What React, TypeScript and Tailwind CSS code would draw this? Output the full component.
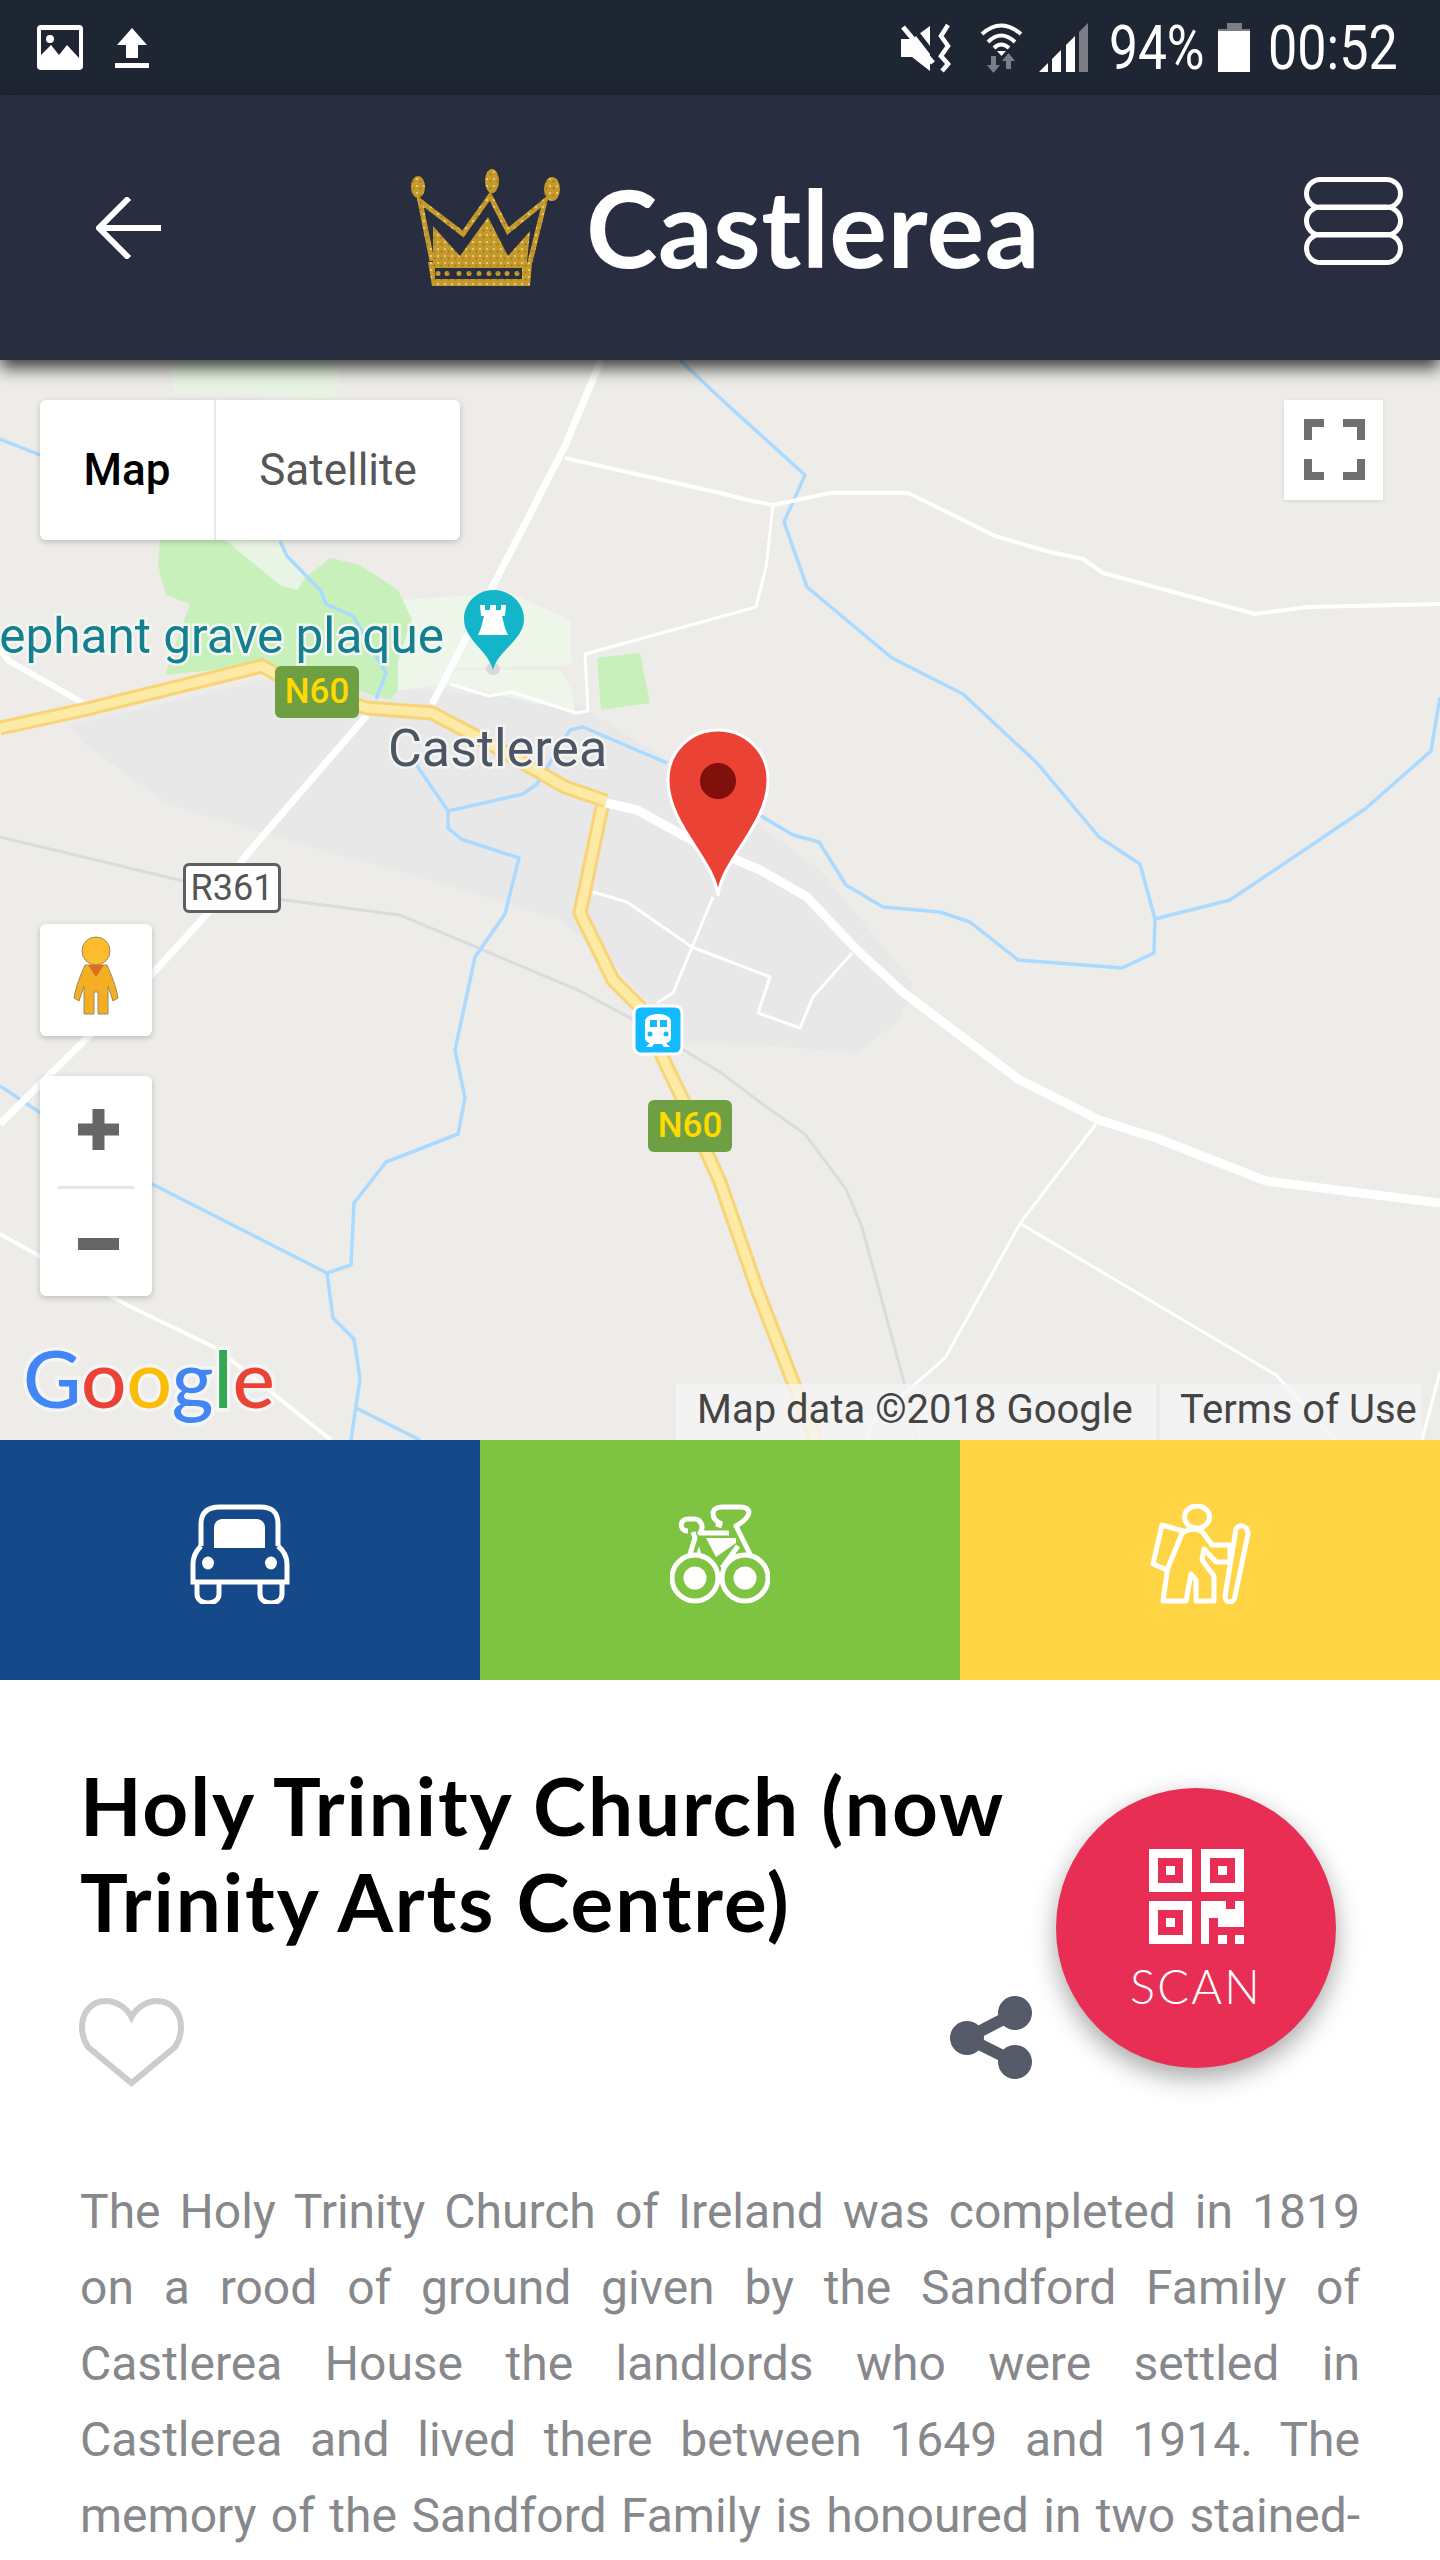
import React from 'react';

const whiteRoads: [string, number][] = [
  ['606,803 637,810 697,843 760,870 807,897 857,950 904,993 1018,1079 1099,1120 1156,1138 1266,1181 1440,1203', 9],
  ['601,360 565,446 494,584 432,704', 7],
  ['367,715 243,859 207,914 154,972 87,1038 0,1124', 7],
  ['0,650 9,661 83,703', 6],
  ['0,1234 129,1306 216,1348 331,1440', 4],
  ['565,458 720,493 752,501 773,505 830,493 908,493 945,511 995,536 1046,551 1083,559 1103,573 1255,614 1308,607 1440,604', 4],
  ['773,505 766,567 756,607 720,617 585,654 588,711 576,713 512,692 489,696 450,684', 3],
  ['593,892 627,902 692,947 770,977 758,1013 800,1028 813,997 852,953', 3],
  ['713,897 673,993 657,1003', 3],
  ['1096,1124 1021,1222 945,1358 913,1386 871,1423 868,1440', 3],
  ['1021,1224 1276,1375 1335,1440', 3],
  ['1440,1372 1422,1440', 3],
];

const rivers = [
  '720,398 805,475 784,522 807,587 892,658 963,694 1037,763 1099,837 1140,864 1155,919 1154,953 1122,968 1018,960 970,922 940,912 883,907 846,885 819,842 793,835 761,816',
  '667,763 583,727 570,730 537,784 523,794 448,811 448,828 461,839 519,858 505,914 475,957 455,1050 465,1098 458,1134 386,1162 354,1203 351,1265 327,1273 152,1184 39,1112 0,1086',
  '448,811 415,763',
  '327,1273 333,1318 354,1339 360,1379 351,1440',
  '356,1408 420,1440',
  '1440,697 1431,751 1365,809 1230,900 1155,919',
  '680,360 720,398',
  '0,439 40,455',
  '280,541 287,556 321,591 326,604 353,616 386,673 376,699',
];

const n60 = [
  '0,728 87,709 262,666 294,684 367,708 432,713 487,742 565,787 606,801',
  '602,807 580,913 613,980 640,1007 667,1067 683,1100 720,1182 757,1289 793,1382 816,1440',
];

function MapCanvas() {
  return (
    <svg viewBox="0 360 1440 1080" className="absolute inset-0 w-full h-full">
      <rect x="0" y="360" width="1440" height="1080" fill="#edece8" />
      {/* town */}
      <polygon points="70,725 262,680 400,690 570,700 700,780 820,870 913,983 900,1020 857,1053 760,1045 683,1043 610,960 560,920 430,880 321,850 170,805 85,745" fill="#e8e8e8" />
      {/* parks */}
      <polygon points="170,360 340,360 335,400 225,392 174,394" fill="#e8f4e4" />
      <polygon points="398,660 450,670 560,670 572,690 575,712 450,684 398,690" fill="#eef6ea" />
      <polygon points="400,600 510,593 570,620 572,665 400,670" fill="#eef6ea" />
      <polygon points="160,540 158,565 166,595 190,604 170,660 165,675 262,665 290,670 390,700 398,690 398,660 412,620 398,590 360,565 330,558 305,578 297,590 280,585 230,540" fill="#c8f0bb" />
      <polygon points="225,540 280,585 297,590 305,578 280,541" fill="#e8f4e4" />
      <polygon points="597,658 640,653 650,703 601,710" fill="#c8f0bb" />
      {/* railway */}
      <polyline points="0,837 179,880 285,900 400,915 578,990 634,1020 720,1072 761,1103 805,1134 846,1189 862,1227 904,1382 917,1440" fill="none" stroke="#d8dcdf" strokeWidth="3" />
      {rivers.map((r, i) => (
        <polyline key={i} points={r} fill="none" stroke="#aadaff" strokeWidth="3.5" strokeLinejoin="round" />
      ))}
      {whiteRoads.map(([r, w], i) => (
        <polyline key={i} points={r} fill="none" stroke="#ffffff" strokeWidth={w} strokeLinejoin="round" />
      ))}
      {n60.map((r, i) => (
        <polyline key={i} points={r} fill="none" stroke="#f8d377" strokeWidth="15" strokeLinejoin="round" />
      ))}
      {n60.map((r, i) => (
        <polyline key={i} points={r} fill="none" stroke="#fdeba5" strokeWidth="9" strokeLinejoin="round" />
      ))}

      {/* labels */}
      <text x="444" y="653" textAnchor="end" fontSize="49.5" fill="#14808f" stroke="#f4f6f2" strokeWidth="5" paintOrder="stroke" className="font-['Roboto']">
        ephant grave plaque
      </text>
      <text x="388" y="766" fontSize="52" fill="#4b5563" stroke="#f4f4f2" strokeWidth="5" paintOrder="stroke" className="font-['Roboto']">
        Castlerea
      </text>

      {/* landmark pin */}
      <ellipse cx="493" cy="669" rx="7" ry="6" fill="#d8d8d8" />
      <path d="M493 670 C488 650 464 640 464 619 C464 603 477 590 493.5 590 C510 590 524 603 524 619 C524 640 498 650 493 670 Z" fill="#14b5c8" />
      <polygon points="480,605 485,605 485,610 490,610 490,605 496,605 496,610 501,610 501,605 506,605 505,616 502,616 505,628 508,635 478,635 481,628 484,616 481,616" fill="#ffffff" />

      {/* train stop */}
      <rect x="634" y="1006" width="48" height="48" rx="7" fill="#14baff" stroke="#ffffff" strokeWidth="3" />
      <path d="M645 1022 C645 1016 652 1014 658 1014 C664 1014 671 1016 671 1022 V1038 C671 1041 668 1043 665 1043 H651 C648 1043 645 1041 645 1038 Z" fill="#ffffff" />
      <rect x="650" y="1020" width="7" height="7" fill="#14baff" />
      <rect x="660" y="1020" width="7" height="7" fill="#14baff" />
      <circle cx="650" cy="1034" r="2.5" fill="#14baff" />
      <circle cx="666" cy="1034" r="2.5" fill="#14baff" />
      <path d="M650 1043 L646 1047 H652 L654 1044 H662 L664 1047 H670 L666 1043 Z" fill="#ffffff" />

      {/* red marker */}
      <path d="M718 896 C715 860 668 825 668 780 C668 752 690 730 718 730 C746 730 768 752 768 780 C768 825 721 860 718 896 Z" fill="#ea4335" stroke="#ffffff" strokeWidth="3" />
      <circle cx="718" cy="781" r="18" fill="#7f100c" />

      {/* google logo */}
      <text x="23" y="1408" fontSize="80" fontWeight="500" stroke="#f5f5f5" strokeWidth="7" paintOrder="stroke" className="font-['Lato']">
        <tspan fill="#4285f4">G</tspan>
        <tspan fill="#ea4335">o</tspan>
        <tspan fill="#fbbc05">o</tspan>
        <tspan fill="#4285f4">g</tspan>
        <tspan fill="#34a853">l</tspan>
        <tspan fill="#ea4335">e</tspan>
      </text>
    </svg>
  );
}

function Shield({ className }: { className: string }) {
  return (
    <div className={`absolute w-[84px] h-[52px] rounded-md bg-[#6f9f43] text-[#ffd900] text-[35px] font-medium flex items-center justify-center ${className}`}>
      N60
    </div>
  );
}

function Crown() {
  return (
    <svg viewBox="30 18 150 122" className="w-[150px] h-[122px] shrink-0">
      <defs>
        <pattern id="glitter" width="7" height="7" patternUnits="userSpaceOnUse">
          <rect width="7" height="7" fill="#c49a2c" />
          <circle cx="2" cy="2" r="1.1" fill="#efd582" />
          <circle cx="5.5" cy="4.5" r="0.9" fill="#96731d" />
        </pattern>
      </defs>
      <g fill="url(#glitter)">
        <ellipse cx="38" cy="38" rx="7" ry="11" />
        <ellipse cx="112" cy="32" rx="7" ry="12" />
        <ellipse cx="172" cy="40" rx="8" ry="12" />
        <polygon points="53,77 80,107 108,68 128,107 150,82 147,113 53,113" />
        <path fillRule="evenodd" d="M48 113 H152 L150 137 H52 Z M55 119 V130 H142 V119 Z" />
        {[58, 67, 79, 89, 99, 109, 118, 127, 137].map((x) => (
          <circle key={x} cx={x} cy="124.5" r="2.5" />
        ))}
      </g>
      <polyline points="52,112 40,52 83,85 110,47 128,82 165,52 150,113" fill="none" stroke="url(#glitter)" strokeWidth="5" />
    </svg>
  );
}

function StatusBar() {
  return (
    <div className="h-[95px] bg-[#1e2533] flex items-center text-white">
      <svg viewBox="0 0 46 45" className="w-[46px] h-[45px] ml-[37px]">
        <rect width="46" height="45" rx="4" fill="#ffffff" />
        <rect x="4" y="5" width="38" height="30" fill="#1e2533" />
        <circle cx="13" cy="14" r="4" fill="#ffffff" />
        <polygon points="4,35 4,30 14,20 22,30 30,20 42,33 42,38 4,38" fill="#ffffff" />
      </svg>
      <svg viewBox="0 0 34 40" className="w-[34px] h-[40px] ml-[32px]">
        <polygon points="17,0 32,17 23,17 23,30 11,30 11,17 2,17" fill="#ffffff" />
        <rect x="0" y="35" width="34" height="5" fill="#ffffff" />
      </svg>
      <svg viewBox="0 0 52 50" className="w-[52px] h-[50px] ml-[751px]">
        <polygon points="1,16 12,16 30,3 30,48 12,34 1,34" fill="#ffffff" />
        <line x1="9" y1="0" x2="37" y2="36" stroke="#1e2533" strokeWidth="5" />
        <line x1="3" y1="4" x2="33" y2="40" stroke="#ffffff" strokeWidth="5" />
        <polyline points="48,2 41,13 48,23 41,33 48,41 42,48" fill="none" stroke="#ffffff" strokeWidth="4.5" />
      </svg>
      <svg viewBox="0 0 43 50" className="w-[43px] h-[50px] ml-[28px]">
        <g fill="none" stroke="#ffffff" strokeWidth="4">
          <path d="M2 11 Q21 -6 41 11" />
          <path d="M8 19 Q21 6 35 19" />
          <path d="M14 25 Q21 18 29 25" />
        </g>
        <polygon points="17,28 26,28 21.5,33" fill="#ffffff" />
        <polygon points="11,33 16,33 16,42 20,42 13.5,50 7,42 11,42" fill="#7b7e87" />
        <polygon points="28.5,30 35,38 31,38 31,46 26,46 26,38 22,38" fill="#7b7e87" />
      </svg>
      <svg viewBox="0 0 49 49" className="w-[49px] h-[49px] ml-[16px]">
        <polygon points="0,49 9,40 9,49" fill="#ffffff" />
        <polygon points="13,36 22,27 22,49 13,49" fill="#ffffff" />
        <polygon points="27,22 36,13 36,49 27,49" fill="#ffffff" />
        <polygon points="40,9 49,0 49,49 40,49" fill="#7b7e87" />
      </svg>
      <span className="ml-[21px] w-[94px] text-[62px] leading-none origin-left scale-x-[0.83] whitespace-nowrap">94%</span>
      <div className="ml-[15px] w-[32px] h-[49px] flex flex-col items-center">
        <div className="w-[15px] h-[6px] bg-[#7b7e87]" />
        <div className="w-[32px] h-[2px] bg-[#7b7e87]" />
        <div className="w-[32px] h-[41px] bg-white" />
      </div>
      <span className="ml-[18px] text-[62px] leading-none origin-left scale-x-[0.84] whitespace-nowrap">00:52</span>
    </div>
  );
}

function Header() {
  return (
    <header className="relative z-10 h-[265px] bg-[#282e40] flex items-center shadow-[0_8px_16px_rgba(0,0,0,0.75)]">
      <svg viewBox="0 0 65 62" className="w-[65px] h-[62px] ml-[96px] shrink-0">
        <polyline points="33,1 3,31 33,61" fill="none" stroke="#ffffff" strokeWidth="6" />
        <line x1="5" y1="31" x2="65" y2="31" stroke="#ffffff" strokeWidth="6" />
      </svg>
      <div className="ml-[249px] flex items-center w-[894px]">
        <Crown />
        <span className="ml-[26px] -mt-[4px] text-[108px] leading-none font-bold text-white font-['Lato'] tracking-[0.5px]">Castlerea</span>
      </div>
      <svg viewBox="0 0 99 88" className="w-[99px] h-[88px] mb-[14px] shrink-0">
        <g fill="none" stroke="#ffffff" strokeWidth="5">
          <rect x="2.5" y="2.5" width="94" height="28" rx="14" />
          <rect x="2.5" y="30" width="94" height="28" rx="14" />
          <rect x="2.5" y="57.5" width="94" height="28" rx="14" />
        </g>
      </svg>
    </header>
  );
}

function MapSection() {
  return (
    <section className="relative h-[1080px] overflow-hidden">
      <MapCanvas />
      <Shield className="left-[275px] top-[306px]" />
      <Shield className="left-[648px] top-[740px]" />
      <div className="absolute left-[183px] top-[503px] w-[98px] h-[50px] rounded-md bg-white border-[3px] border-[#5f5f5f] text-[#555] text-[36px] leading-none flex items-center justify-center">
        R361
      </div>

      {/* map type */}
      <div className="absolute left-[40px] top-[40px] w-[420px] h-[140px] bg-white rounded-md flex shadow-[0_2px_6px_rgba(0,0,0,0.2)] text-[44px]">
        <div className="w-[176px] border-r-2 border-[#e8e8e8] flex items-center justify-center font-medium text-black">Map</div>
        <div className="flex-1 flex items-center justify-center text-[#565656]">Satellite</div>
      </div>

      {/* fullscreen */}
      <div className="absolute left-[1284px] top-[40px] w-[99px] h-[100px] bg-white shadow-[0_1px_4px_rgba(0,0,0,0.1)]">
        <svg viewBox="0 0 99 100" className="w-full h-full">
          <g fill="none" stroke="#6f6f6f" strokeWidth="8">
            <polyline points="24,40 24,23 40,23" />
            <polyline points="59,23 77,23 77,40" />
            <polyline points="24,59 24,76 40,76" />
            <polyline points="59,76 77,76 77,59" />
          </g>
        </svg>
      </div>

      {/* pegman */}
      <div className="absolute left-[40px] top-[564px] w-[112px] h-[112px] bg-white rounded-md shadow-[0_2px_6px_rgba(0,0,0,0.2)]">
        <svg viewBox="0 0 112 112" className="w-full h-full">
          <circle cx="56" cy="27" r="14" fill="#fdbd2c" stroke="#9a8a60" strokeWidth="1" />
          <path d="M45 41 H67 C71 50 76 62 78 74 L73 77 L68 62 V90 H58 V68 H54 V90 H44 V62 L39 77 L34 74 C36 62 41 50 45 41 Z" fill="#f5ae24" stroke="#9a8a60" strokeWidth="1" />
          <polygon points="48,41 64,41 56,53" fill="#d9701a" />
        </svg>
      </div>

      {/* zoom */}
      <div className="absolute left-[40px] top-[716px] w-[112px] h-[220px] bg-white rounded-md flex flex-col items-center shadow-[0_2px_6px_rgba(0,0,0,0.2)]">
        <svg viewBox="0 0 41 41" className="w-[41px] h-[41px] mt-[33px] ml-[4px]">
          <path d="M14.5 0 H26.5 V14.5 H41 V26.5 H26.5 V41 H14.5 V26.5 H0 V14.5 H14.5 Z" fill="#666666" />
        </svg>
        <div className="w-[76px] h-[3px] bg-[#e6e6e6] mt-[36px]" />
        <div className="w-[41px] h-[12px] bg-[#666666] mt-[49px] ml-[4px]" />
      </div>

      {/* attribution */}
      <div className="absolute left-[676px] bottom-0 h-[56px] flex text-[40px] leading-none text-[#444] gap-[4px]">
        <div className="w-[480px] pl-[21px] pb-[5px] bg-[#f5f5f5]/80 flex items-center whitespace-nowrap">Map data ©2018 Google</div>
        <div className="w-[262px] pl-[20px] pb-[5px] bg-[#f5f5f5]/80 flex items-center whitespace-nowrap">Terms of Use</div>
      </div>
    </section>
  );
}

function TravelTabs() {
  return (
    <div className="h-[240px] flex">
      <div className="w-[480px] bg-[#15498a] flex items-start justify-center pt-[64px]">
        <svg viewBox="0 0 100 100" className="w-[100px] h-[100px]">
          <g fill="none" stroke="#ffffff" strokeWidth="5">
            <path d="M11 42 V20 C11 7 19 3 30 3 H70 C81 3 88 7 88 20 V42" />
            <path d="M11 42 C6 47 3 52 3 60 V78 H97 V60 C97 52 94 47 88 42" />
            <path d="M7 79 V90 C7 102 29 102 29 90 V79" />
            <path d="M70 79 V90 C70 102 92 102 92 90 V79" />
          </g>
          <path d="M24 44 V24 C24 18 28 15 33 15 H66 C71 15 75 18 75 24 V44 Z" fill="#ffffff" />
          <ellipse cx="18" cy="59" rx="6" ry="6.5" fill="#ffffff" />
          <ellipse cx="81" cy="59" rx="6" ry="6.5" fill="#ffffff" />
        </svg>
      </div>
      <div className="w-[480px] bg-[#7fc342] flex items-start justify-center pt-[64px]">
        <svg viewBox="0 0 100 100" className="w-[100px] h-[100px]">
          <g fill="none" stroke="#ffffff" strokeWidth="5" strokeLinejoin="round">
            <circle cx="25" cy="74" r="23" />
            <circle cx="75" cy="74" r="23" />
            <path d="M52 20 C40 15 40 3 52 3 H70 C82 3 83 12 66 22 L81 52" />
            <path d="M46 20 L52 22" />
            <path d="M18 27 C9 27 9 15 18 15 H24 C32 15 34 24 30 29 H59" />
            <path d="M23 28 L25 34 L20 50" />
            <path d="M68 42 L52 64" />
          </g>
          <circle cx="25" cy="74" r="11.5" fill="#ffffff" />
          <circle cx="75" cy="74" r="11.5" fill="#ffffff" />
          <polygon points="36,34 66,34 66,39 46,53" fill="#ffffff" />
          <polygon points="29,42 33,56 26,51" fill="#ffffff" />
        </svg>
      </div>
      <div className="w-[480px] bg-[#ffd545] flex items-start justify-center pt-[64px]">
        <svg viewBox="0 0 101 100" className="w-[101px] h-[100px]">
          <g fill="none" stroke="#ffffff" strokeWidth="5" strokeLinejoin="round">
            <ellipse cx="47" cy="13" rx="12.5" ry="11" />
            <path d="M12 21 L33 27 L17 66 L3 60 Z" />
            <path d="M33 29 C38 24 50 24 54 30 L62 41 H80 V58 H66 L54 45 L52 56 L64 72 V97 H46 V76 L41 70 L36 97 H13 L18 62" />
            <path d="M86 25 C90 19 98 22 98 30 L85 92 C84 100 75 100 75 92 Z" />
          </g>
        </svg>
      </div>
    </div>
  );
}

function ScanButton() {
  return (
    <div className="absolute left-[1056px] top-[108px] w-[280px] h-[280px] rounded-full bg-[#e82e54] shadow-[0_10px_26px_rgba(0,0,0,0.35)] flex flex-col items-center">
      <svg viewBox="0 0 95 95" className="w-[95px] h-[95px] mt-[61px] shrink-0">
        <g fill="none" stroke="#ffffff" strokeWidth="9">
          <rect x="4.5" y="4.5" width="34" height="34" />
          <rect x="56.5" y="4.5" width="34" height="34" />
          <rect x="4.5" y="56.5" width="34" height="34" />
        </g>
        <g fill="#ffffff">
          <rect x="17" y="17" width="9" height="9" />
          <rect x="69" y="17" width="9" height="9" />
          <rect x="17" y="69" width="9" height="9" />
          <polygon points="52,52 77,52 77,60 86,60 86,52 95,52 95,78 69,78 69,69 60,69 60,95 52,95" />
          <rect x="69" y="86" width="9" height="9" />
          <rect x="86" y="86" width="9" height="9" />
        </g>
      </svg>
      <span className="mt-[14px] text-[47px] leading-[56px] font-light text-white font-['Lato'] tracking-[2.2px]">SCAN</span>
    </div>
  );
}

const bodyLines = [
  'The Holy Trinity Church of Ireland was completed in 1819',
  'on a rood of ground given by the Sandford Family of',
  'Castlerea House the landlords who were settled in',
  'Castlerea and lived there between 1649 and 1914. The',
  'memory of the Sandford Family is honoured in two stained-',
];

function Details() {
  return (
    <section className="relative bg-white px-20 pt-[77px]">
      <h1 className="text-[80px] leading-[96px] font-bold text-black font-['Lato'] tracking-[1.9px] whitespace-nowrap">
        Holy Trinity Church (now
        <br />
        Trinity Arts Centre)
      </h1>
      <div className="mt-[49px] w-[952px] flex justify-between items-start">
        <svg viewBox="0 0 105 90" className="w-[105px] h-[90px] -ml-px">
          <path d="M52.5 19 C47 9 37 3 27 3 C13 3 3 14 3 29 C3 37 5 43 9 49 L52.5 85 L96 49 C100 43 102 37 102 29 C102 14 92 3 78 3 C68 3 58 9 52.5 19 Z" fill="none" stroke="#cccccc" strokeWidth="6" />
        </svg>
        <svg viewBox="0 0 82 84" className="w-[82px] h-[84px] -mt-[2px]">
          <g stroke="#555a68" strokeWidth="12">
            <line x1="17" y1="42" x2="65" y2="17" />
            <line x1="17" y1="42" x2="65" y2="66" />
          </g>
          <g fill="#555a68">
            <circle cx="17" cy="42" r="17" />
            <circle cx="65" cy="17" r="17" />
            <circle cx="65" cy="66" r="17" />
          </g>
        </svg>
      </div>
      <div className="mt-[86px] w-[1280px] text-[48px] leading-[76px] text-[#87888c]">
        {bodyLines.map((line) => (
          <p key={line} className="text-justify [text-align-last:justify]">
            {line}
          </p>
        ))}
      </div>
      <ScanButton />
    </section>
  );
}

export default function App() {
  return (
    <div className="w-[1440px] h-[2560px] overflow-hidden bg-white font-['Roboto',sans-serif]">
      <StatusBar />
      <Header />
      <MapSection />
      <TravelTabs />
      <Details />
    </div>
  );
}
